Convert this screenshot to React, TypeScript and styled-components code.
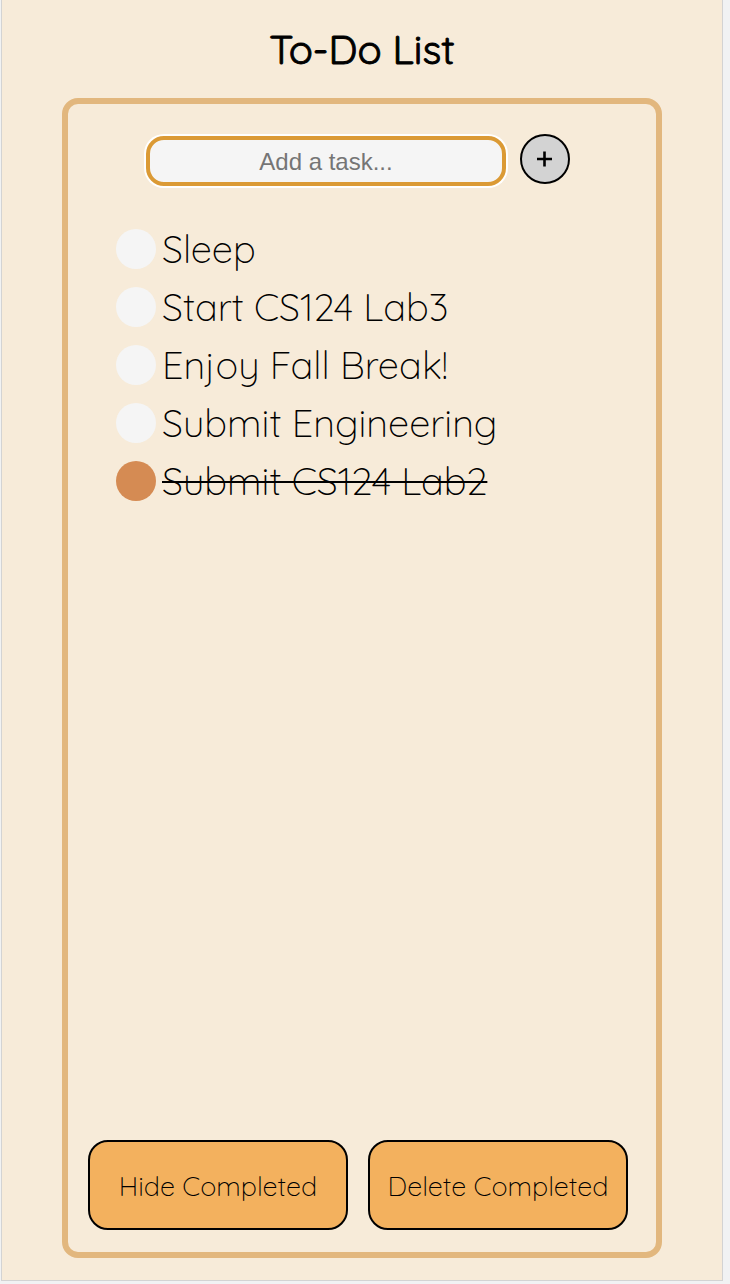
import React, { useState } from "react";
import styled, { createGlobalStyle } from "styled-components";

const GlobalStyle = createGlobalStyle`
  *, *::before, *::after { box-sizing: border-box; }
  body {
    margin: 0;
    background: #f1f2f3;
    color: #000;
    font-family: Quicksand, Lato, "Liberation Sans", sans-serif;
  }
`;

const Page = styled.main`
  display: flex;
  flex-direction: column;
  min-height: calc(100vh - 3px);
  margin: 0 7px 3px 1px;
  padding: 0 60px 22px;
  border: 1px solid #d3d3d3;
  border-top: 0;
  background: #f7ebd9;
`;

const Title = styled.h1`
  margin: 0;
  padding-top: 24px;
  height: 98px;
  font-size: 40px;
  line-height: 50px;
  font-weight: 400;
  -webkit-text-stroke: 1px #000;
  text-align: center;
`;

const Card = styled.section`
  display: flex;
  flex: 1;
  flex-direction: column;
  padding: 30px 28px 22px 20px;
  border: 6px solid #e2b77e;
  border-radius: 16px;
`;

const AddForm = styled.form`
  display: flex;
  justify-content: center;
  gap: 14px;
`;

const TaskInput = styled.input`
  flex: 0 1 360px;
  min-width: 0;
  height: 50px;
  margin-top: 2px;
  padding: 2px 8px 0;
  border: 4px solid #db9a35;
  border-radius: 18px;
  outline: 0;
  background: #f5f5f5;
  box-shadow: 0 0 0 2px #fff;
  font: 24px "Liberation Sans", Arial, sans-serif;
  text-align: center;

  &::placeholder { color: #757575; opacity: 1; }
`;

const AddButton = styled.button`
  display: grid;
  place-items: center;
  flex: none;
  width: 50px;
  height: 50px;
  padding: 0;
  border: 2px solid #000;
  border-radius: 50%;
  background: #d3d3d3;
  cursor: pointer;
`;

const TaskList = styled.ul`
  flex: 1;
  margin: 0;
  padding: 34px 0 40px 28px;
  list-style: none;
`;

const TaskRow = styled.li`
  display: flex;
  align-items: center;
  min-height: 58px;
`;

const Tick = styled.input`
  appearance: none;
  flex: none;
  width: 40px;
  height: 40px;
  margin: 0 6px 0 0;
  border-radius: 50%;
  background: #f5f5f5;
  cursor: pointer;

  &:checked { background: #d58b53; }
`;

const TaskLabel = styled.label<{ $done: boolean }>`
  font-size: 38px;
  line-height: 48px;
  font-weight: 330;
  text-decoration: ${({ $done }) => ($done ? "line-through" : "none")};
  text-decoration-thickness: 2px;
`;

const Actions = styled.footer`
  display: grid;
  grid-template-columns: 1fr 1fr;
  gap: 20px;
`;

const ActionButton = styled.button`
  min-height: 90px;
  padding: 2px 8px 0;
  border: 2px solid #000;
  border-radius: 20px;
  background: #f3b15e;
  color: #000;
  font-family: inherit;
  font-size: 27px;
  line-height: 32px;
  font-weight: 330;
  cursor: pointer;
`;

interface Task {
  id: number;
  text: string;
  done: boolean;
}

const initialTasks: Task[] = [
  { id: 1, text: "Sleep", done: false },
  { id: 2, text: "Start CS124 Lab3", done: false },
  { id: 3, text: "Enjoy Fall Break!", done: false },
  { id: 4, text: "Submit Engineering", done: false },
  { id: 5, text: "Submit CS124 Lab2", done: true },
];

export default function App() {
  const [tasks, setTasks] = useState(initialTasks);
  const [draft, setDraft] = useState("");
  const [hidden, setHidden] = useState(false);

  const addTask = (event: React.FormEvent) => {
    event.preventDefault();
    const text = draft.trim();
    if (!text) return;
    setTasks([{ id: Date.now(), text, done: false }, ...tasks]);
    setDraft("");
  };

  const toggle = (id: number) =>
    setTasks(tasks.map((t) => (t.id === id ? { ...t, done: !t.done } : t)));

  return (
    <>
      <GlobalStyle />
      <Page>
        <Title>To-Do List</Title>
        <Card>
          <AddForm onSubmit={addTask}>
            <TaskInput
              aria-label="Add a task"
              placeholder="Add a task..."
              value={draft}
              onChange={(e) => setDraft(e.target.value)}
            />
            <AddButton type="submit" aria-label="Add">
              <svg width="16" height="16" viewBox="0 0 16 16" aria-hidden="true">
                <path d="M0 8H15M7.5 0.5V15.5" stroke="#000" strokeWidth="2.6" />
              </svg>
            </AddButton>
          </AddForm>
          <TaskList>
            {tasks
              .filter((t) => !(hidden && t.done))
              .map((t) => (
                <TaskRow key={t.id}>
                  <Tick
                    type="checkbox"
                    id={`task-${t.id}`}
                    checked={t.done}
                    onChange={() => toggle(t.id)}
                  />
                  <TaskLabel htmlFor={`task-${t.id}`} $done={t.done}>
                    {t.text}
                  </TaskLabel>
                </TaskRow>
              ))}
          </TaskList>
          <Actions>
            <ActionButton type="button" onClick={() => setHidden(!hidden)}>
              {hidden ? "Show Completed" : "Hide Completed"}
            </ActionButton>
            <ActionButton
              type="button"
              onClick={() => setTasks(tasks.filter((t) => !t.done))}
            >
              Delete Completed
            </ActionButton>
          </Actions>
        </Card>
      </Page>
    </>
  );
}
